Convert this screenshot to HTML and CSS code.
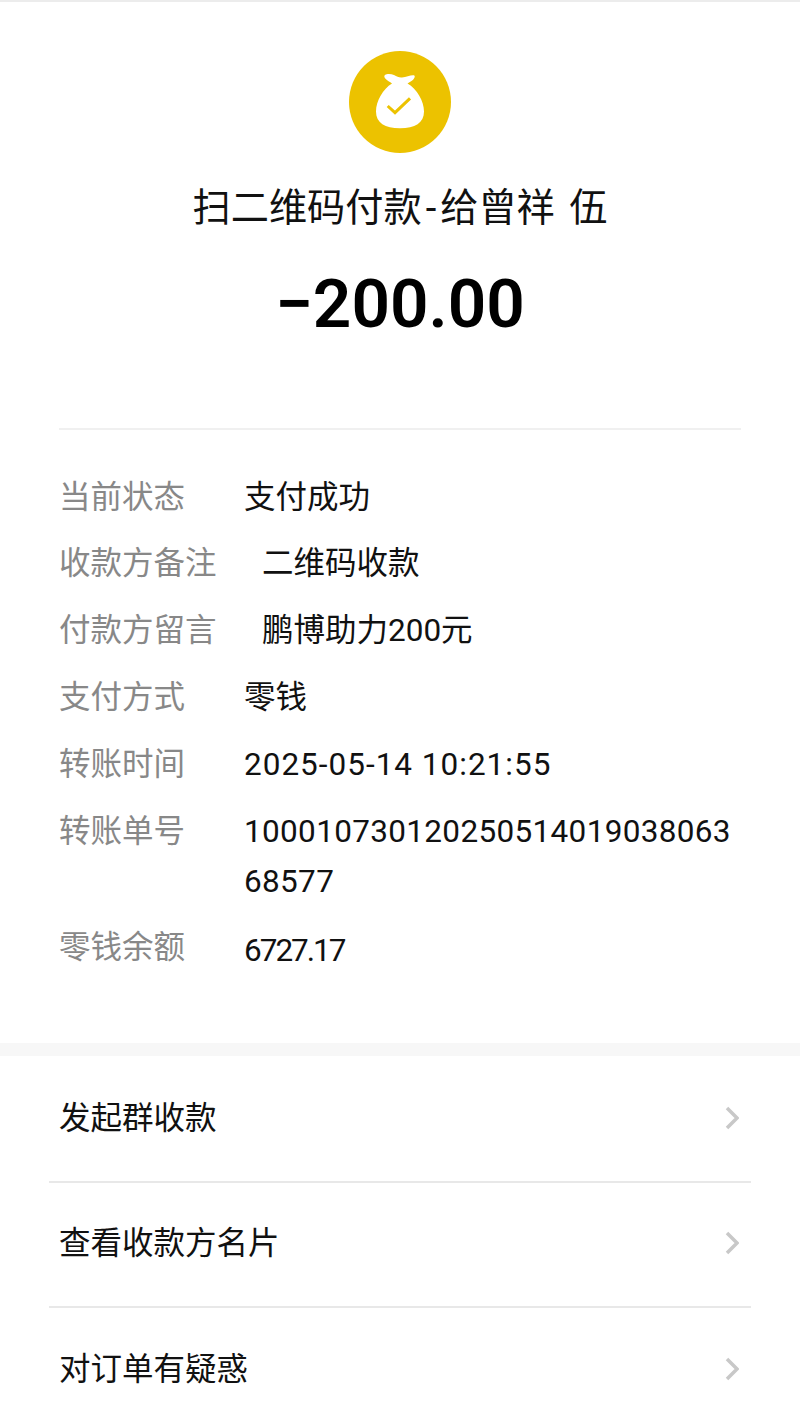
FILE: index.html
```html
<!DOCTYPE html>
<html lang="zh-CN">

<head>
    <meta charset="UTF-8">
    <meta name="viewport" content="width=device-width, initial-scale=1.0">
    <title>账单详情</title>
    <link rel="stylesheet" href="styles.css">
</head>

<body>
    <div class="top-line"></div>

    <!-- Payment summary -->
    <div class="summary">
        <svg class="bag-icon" viewBox="0 0 102 102" width="102" height="102">
            <circle cx="51" cy="51" r="51" fill="#ecc200" />
            <path d="M36 24C38 22.500 42 22.700 45 24C48 25.500 50 26.800 53 26.500C57 26 61 24.300 64 24.300C66.500 24.300 66 26.500 64.500 28.300C63 30 60.500 31.300 58.500 32.500C68 38 75 50 75 60.500C75 72 66 77.300 51 77.300C36 77.300 27 72 27 60.500C27 50 34 38 43 32.500C41 31 38 29.500 36.500 27.800C35.300 26.500 34.800 25 36 24Z" fill="#fff" />
            <path d="M38.700 55L46 61.700L61 47.300" fill="none" stroke="#ecc200" stroke-width="3" />
        </svg>
        <div class="summary-title">扫二维码付款<span class="title-dash">-</span>给曾祥 伍</div>
        <div class="summary-amount">−200.00</div>
    </div>

    <!-- Details -->
    <div class="details">
        <div class="detail-row">
            <div class="detail-label">当前状态</div>
            <div class="detail-value">支付成功</div>
        </div>
        <div class="detail-row">
            <div class="detail-label">收款方备注</div>
            <div class="detail-value indented">二维码收款</div>
        </div>
        <div class="detail-row">
            <div class="detail-label">付款方留言</div>
            <div class="detail-value indented">鹏博助力200元</div>
        </div>
        <div class="detail-row">
            <div class="detail-label">支付方式</div>
            <div class="detail-value">零钱</div>
        </div>
        <div class="detail-row">
            <div class="detail-label">转账时间</div>
            <div class="detail-value time">2025-05-14 10:21:55</div>
        </div>
        <div class="detail-row">
            <div class="detail-label">转账单号</div>
            <div class="detail-value order-no">10001073012025051401903806368577</div>
        </div>
        <div class="detail-row">
            <div class="detail-label">零钱余额</div>
            <div class="detail-value balance">6727.17</div>
        </div>
    </div>

    <div class="band"></div>

    <!-- Links -->
    <div class="links">
        <div class="link-row">
            <span class="link-text">发起群收款</span>
            <svg class="chevron" viewBox="0 0 14 24" width="14" height="24"><path d="M2 2L12 12L2 22" /></svg>
        </div>
        <div class="link-row">
            <span class="link-text">查看收款方名片</span>
            <svg class="chevron" viewBox="0 0 14 24" width="14" height="24"><path d="M2 2L12 12L2 22" /></svg>
        </div>
        <div class="link-row">
            <span class="link-text">对订单有疑惑</span>
            <svg class="chevron" viewBox="0 0 14 24" width="14" height="24"><path d="M2 2L12 12L2 22" /></svg>
        </div>
    </div>
</body>

</html>
```

FILE: styles.css
```css
body {
    font-family: Roboto, "Noto Sans CJK SC", sans-serif;
    margin: 0;
    padding: 0;
    background: #fff;
    color: #111;
    height: 1418px;
    overflow: hidden;
}

.top-line {
    height: 2px;
    background: #ececec;
}

.summary {
    display: flex;
    flex-direction: column;
    align-items: center;
    padding-top: 49px;
    margin: 0 59px;
    height: 377px;
    border-bottom: 2px solid #f0f0f0;
}

.bag-icon {
    display: block;
}

.summary-title {
    font-size: 38.200px;
    line-height: 50px;
    margin-top: 30px;
    word-spacing: 5px;
}

.title-dash {
    margin: 0 4px;
}

.summary-amount {
    font-size: 67.500px;
    font-weight: 600;
    line-height: 80px;
    margin-top: 31px;
    color: #000;
}

.details {
    padding: 34.600px 59px 57.800px;
    font-size: 31.500px;
    line-height: 50px;
}

.detail-row {
    display: flex;
    padding: 8px 0 8.800px;
}

.detail-label {
    width: 185px;
    flex: none;
    color: #888;
}

.detail-value {
    flex: 1;
    word-break: break-all;
}

.indented {
    padding-left: 18px;
}

.time {
    letter-spacing: 1px;
}

.order-no {
    letter-spacing: 0.330px;
}

.balance {
    padding-top: 3px;
    letter-spacing: -2px;
}

.band {
    height: 13px;
    background: #f7f7f7;
}

.links {
    margin: 0 49px;
    padding-top: 2px;
}

.link-row {
    display: flex;
    justify-content: space-between;
    align-items: center;
    height: 125px;
    padding: 0 12px 4px 10px;
    font-size: 31.500px;
    border-bottom: 2px solid #e8e8e8;
    box-sizing: border-box;
}

.link-row:last-child {
    border-bottom: none;
}

.link-text {
    margin-bottom: 4px;
}

.chevron {
    margin-top: 2px;
    fill: none;
    stroke: #c8c8c8;
    stroke-width: 3.500;
}
```
